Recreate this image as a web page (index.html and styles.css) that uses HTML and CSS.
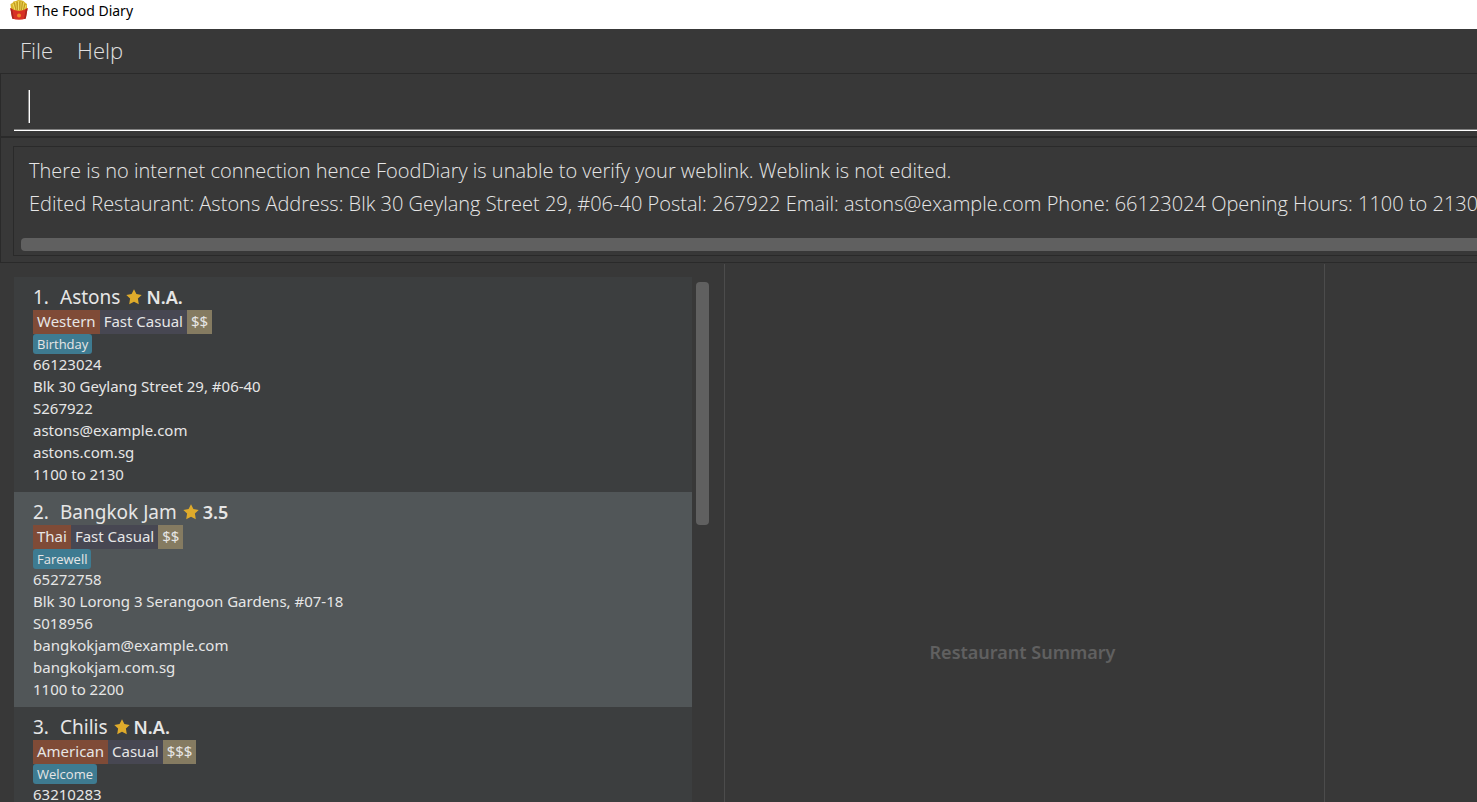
FILE: index.html
```html
<!DOCTYPE html>
<html lang="en">
<head>
<meta charset="utf-8">
<title>The Food Diary</title>
<link rel="stylesheet" href="styles.css">
</head>
<body>
<svg class="sprite" aria-hidden="true">
  <symbol id="star" viewBox="0 0 16 16"><path d="M8 0.2 L10.4 5.1 L15.7 5.9 L11.9 9.6 L12.8 15.2 L8 12.7 L3.2 15.2 L4.1 9.6 L0.3 5.9 L5.6 5.1 Z" fill="#dfab2b"/></symbol>
</svg>
<header class="titlebar">
  <svg class="logo" viewBox="0 0 18 20" aria-hidden="true">
    <path d="M1 9 L0.5 4 L2.5 3 L3.5 1.5 L6 1 L8 0 L11 0.3 L13.5 1 L15 2.5 L17 4 L17 9 L14 12 H4 Z" fill="#d9b52c"/>
    <path d="M3 4 L5 10 M5.5 2 L6.5 10 M8.5 1 V10 M11 2 L10.5 10 M13.5 2.5 L12.5 10 M16 5 L14.5 9" stroke="#f0dc5e" stroke-width="1"/>
    <path d="M4.5 3 L6 10 M7.2 2 V10 M10 1.5 V10 M12.5 2 L11.5 10 M15 4 L13.5 10" stroke="#a98217" stroke-width="0.6"/>
    <path d="M0.3 8 Q9 14 17.7 8 L15.8 18.4 Q9 21 2.2 18.4 Z" fill="#d83125"/>
    <path d="M0.3 8 L2.2 18.4 L4 19 L2.2 9.2 Z M17.7 8 L15.8 18.4 L14 19 L15.8 9.2 Z" fill="#a92520"/>
    <circle cx="9" cy="15.5" r="2" fill="#f08a28"/>
  </svg>
  <span>The Food Diary</span>
</header>
<nav class="menubar">
  <button type="button">File</button>
  <button type="button">Help</button>
</nav>
<section class="command">
  <div class="command-field">
    <span class="caret"></span>
    <input type="text" aria-label="Command">
  </div>
</section>
<section class="result">
  <div class="result-box">
    <textarea rows="2" wrap="off" readonly aria-label="Result">There is no internet connection hence FoodDiary is unable to verify your weblink. Weblink is not edited.
Edited Restaurant: Astons Address: Blk 30 Geylang Street 29, #06-40 Postal: 267922 Email: astons@example.com Phone: 66123024 Opening Hours: 1100 to 2130</textarea>
    <div class="thumb-h"></div>
  </div>
</section>
<main class="panes">
  <section class="pane list-pane">
    <ol class="list">
      <li class="card">
        <h2><span class="num">1.</span>Astons<svg class="star"><use href="#star"/></svg><b>N.A.</b></h2>
        <div class="tags"><span class="cuisine">Western</span><span class="kind">Fast Casual</span><span class="price">$$</span></div>
        <div class="occasions"><span>Birthday</span></div>
        <p>66123024</p>
        <p>Blk 30 Geylang Street 29, #06-40</p>
        <p>S267922</p>
        <p>astons@example.com</p>
        <p>astons.com.sg</p>
        <p>1100 to 2130</p>
      </li>
      <li class="card">
        <h2><span class="num">2.</span>Bangkok Jam<svg class="star"><use href="#star"/></svg><b>3.5</b></h2>
        <div class="tags"><span class="cuisine">Thai</span><span class="kind">Fast Casual</span><span class="price">$$</span></div>
        <div class="occasions"><span>Farewell</span></div>
        <p>65272758</p>
        <p>Blk 30 Lorong 3 Serangoon Gardens, #07-18</p>
        <p>S018956</p>
        <p>bangkokjam@example.com</p>
        <p>bangkokjam.com.sg</p>
        <p>1100 to 2200</p>
      </li>
      <li class="card">
        <h2><span class="num">3.</span>Chilis<svg class="star"><use href="#star"/></svg><b>N.A.</b></h2>
        <div class="tags"><span class="cuisine">American</span><span class="kind">Casual</span><span class="price">$$$</span></div>
        <div class="occasions"><span>Welcome</span></div>
        <p>63210283</p>
      </li>
    </ol>
    <div class="thumb-v"></div>
  </section>
  <section class="pane summary-pane"><p>Restaurant Summary</p></section>
  <section class="pane side-pane"></section>
</main>
</body>
</html>
```
FILE: styles.css
```css
* { box-sizing: border-box; }
body {
  margin: 0;
  height: 100vh;
  overflow: hidden;
  display: flex;
  flex-direction: column;
  background: #383838;
  color: #e6e6e6;
  font-family: "Noto Sans", "Open Sans", sans-serif;
}
h2, p, ol { margin: 0; padding: 0; }
.sprite { position: absolute; width: 0; height: 0; }
.titlebar {
  flex: none;
  display: flex;
  align-items: center;
  gap: 6px;
  height: 29px;
  padding: 0 10px 9px;
  background: #fff;
  color: #000;
  font-size: 14px;
}
.logo { width: 18px; height: 20px; }
.menubar {
  flex: none;
  display: flex;
  gap: 24px;
  height: 44px;
  padding: 0 20px 2px;
}
.menubar button {
  border: 0;
  padding: 0;
  background: none;
  color: #e0e0e0;
  font: 300 22px "Open Sans", "Noto Sans", sans-serif;
}
.command {
  flex: none;
  height: 65px;
  padding: 8px 0 0 13px;
  border: 1px solid #2a2a2a;
  border-right: 0;
  border-bottom-width: 2px;
}
.command-field {
  display: flex;
  align-items: center;
  height: 49px;
  padding-left: 14px;
  border-bottom: 1px solid #fff;
  box-shadow: inset 0 -1px #808080;
}
.caret {
  width: 2px;
  height: 33px;
  border-left: 1px solid #8c8c8c;
  background: #fff;
}
.command input {
  flex: 1;
  height: 33px;
  border: 0;
  padding: 0;
  outline: 0;
  background: none;
  color: #fff;
  font: 300 22px "Open Sans", "Noto Sans", sans-serif;
}
.result {
  flex: none;
  height: 125px;
  padding: 8px 0 6px 12px;
  border: 1px solid #2a2a2a;
  border-width: 0 0 1px 1px;
}
.result-box {
  height: 110px;
  padding: 7px 0 0 7px;
  border: 1px solid #2a2a2a;
  border-right: 0;
}
.result textarea {
  display: block;
  width: 100%;
  height: 66px;
  margin-bottom: 18px;
  padding: 0 0 0 8px;
  border: 0;
  outline: 0;
  resize: none;
  overflow: hidden;
  background: none;
  color: #e6e6e6;
  font: 300 20px/33px "Open Sans", "Noto Sans", sans-serif;
}
.thumb-h {
  height: 13px;
  border-radius: 4px 0 0 4px;
  background: #606060;
}
.panes {
  flex: 1;
  min-height: 0;
  display: grid;
  grid-template-columns: 725fr 600fr 152fr;
  padding-top: 1px;
}
.pane { min-width: 0; min-height: 0; border-right: 1px solid #4c4c4c; }
.side-pane { border-right: 0; }
.list-pane {
  display: flex;
  gap: 4px;
  padding: 13px 15px 0 14px;
  overflow: hidden;
}
.list { flex: 1; list-style: none; }
.card {
  min-height: 215px;
  padding: 7px 19px 6px;
  background: #3c3e3f;
}
.card:nth-child(even) { background: #515658; }
.card h2 {
  display: flex;
  align-items: center;
  height: 26px;
  font-size: 19px;
  font-weight: 400;
}
.num { width: 27px; }
.star { width: 16px; height: 16px; margin: 0 4px 0 6px; }
.card h2 b { font-size: 18px; font-weight: 600; }
.tags, .occasions { display: flex; }
.tags span {
  height: 24px;
  padding: 0 4px;
  font-size: 15px;
  line-height: 22px;
}
.tags .cuisine { background: #7f4b37; }
.tags .kind { background: #474752; }
.tags .price { background: #857b61; }
.occasions { height: 19px; }
.occasions span {
  height: 20px;
  padding: 0 4px;
  border-radius: 3px;
  background: #3e7b91;
  font: 13px/20px "Open Sans", "Noto Sans", sans-serif;
}
.card p { font-size: 15px; line-height: 22px; }
.thumb-v {
  width: 13px;
  height: 243px;
  margin-top: 5px;
  border-radius: 4px;
  background: #606060;
}
.summary-pane {
  padding: 372px 4px 0 0;
  color: #606060;
  font-size: 18px;
  font-weight: 600;
  line-height: 32px;
  text-align: center;
}
```
